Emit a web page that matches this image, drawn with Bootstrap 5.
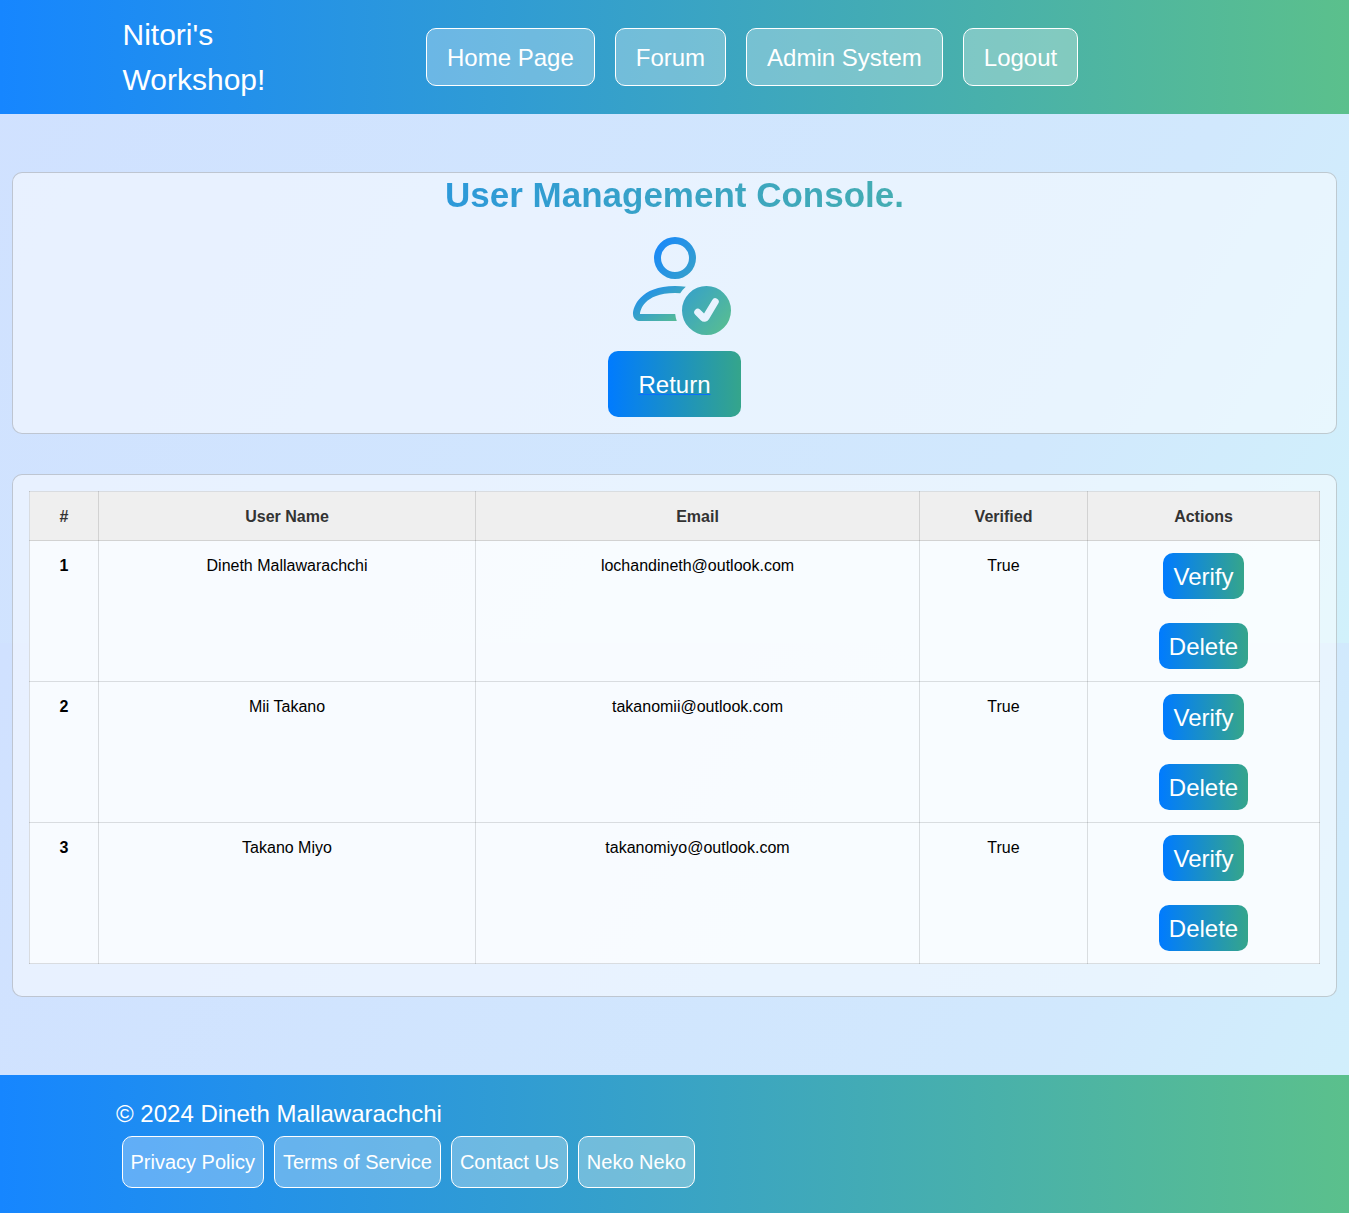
<!DOCTYPE html>
<html lang="en">
<head>
<meta charset="utf-8">
<meta name="viewport" content="width=device-width, initial-scale=1">
<title>User Management Console</title>
<link href="https://cdn.jsdelivr.net/npm/bootstrap@5.3.0/dist/css/bootstrap.min.css" rel="stylesheet">
<style>
body{font-family:"Liberation Sans",Arial,sans-serif;font-size:24px;color:#fff;background:linear-gradient(120deg,#d0e1ff,#d1e8fd 75%,#d1f1fb) 0 0/100% 643px}
.brand-bar{background:linear-gradient(90deg,#1686ff,#5bc08c)}
.site-head{height:114px}
.site-foot{height:138px;margin-top:78px;padding:21px 116px 0}
.copyright{line-height:36px}
.wordmark{width:180px;margin-left:122.5px;font-size:30px;line-height:45px}
.head-links{margin-left:123.5px;gap:20px}
.glass{border:1px solid #fff;border-radius:10px;background:rgba(255,255,255,.3);color:#fff;text-decoration:none}
.head-links .glass{padding:11px 20px 9px;line-height:36px}
.foot-links{gap:10px;margin-top:4px;padding-left:6px}
.foot-links .glass{font-size:20px;line-height:30px;padding:10px 8.5px 10px 7.5px}
.panel{background:rgba(255,255,255,.5);border:1px solid rgba(0,0,0,.18);border-radius:10px;margin:0 12px}
.panel-top{margin-top:58px;height:262px}
.panel-users{margin-top:40px;height:523px;padding:16px}
.console-title{font-size:35px;font-weight:700;line-height:43px;margin:0;color:transparent;background:linear-gradient(90deg,#1686ff,#5bc08c);background-clip:text;-webkit-background-clip:text}
.user-icon{width:112px;height:112px;margin-top:7px}
.act{display:inline-block;border:0;border-radius:10px;color:#fff;background:linear-gradient(90deg,#007bff,#35a58b);line-height:36px;padding:6px 10px 4px;text-decoration:none}
.act-return{padding:16px 30px 14px;margin-top:16px}
.act-return a{color:#fff;text-decoration:underline;text-decoration-color:#0d6efd;text-decoration-thickness:1px}
.users{table-layout:fixed;width:1291px;border-collapse:collapse;font-size:16px;line-height:24px;text-align:center;color:#000;background:rgba(255,255,255,.7)}
.users th,.users td{border:1px solid rgba(0,0,0,.12);padding:13px 12px 11px;vertical-align:top}
.users td.act-cell{padding:12px}
.users thead th{background:#efefef;color:#333}
.users .act{font-size:24px}
.acts{gap:24px}
</style>
</head>
<body>
<header class="site-head brand-bar d-flex align-items-center">
<div class="wordmark">Nitori's Workshop!</div>
<nav class="head-links d-flex">
<a class="glass" href="#">Home Page</a><a class="glass" href="#">Forum</a><a class="glass" href="#">Admin System</a><a class="glass" href="#">Logout</a>
</nav>
</header>
<main>
<section class="panel panel-top d-flex flex-column align-items-center">
<h1 class="console-title align-self-stretch text-center">User Management Console.</h1>
<svg class="user-icon" viewBox="0 0 16 16">
<defs><linearGradient id="g1" x1="0" y1="0" x2="1" y2="1"><stop stop-color="#1686ff"/><stop offset="1" stop-color="#5bc08c"/></linearGradient></defs>
<g fill="url(#g1)"><path d="M12.5 16a3.500 3.500 0 1 0 0-7 3.500 3.500 0 0 0 0 7m1.679-4.493-1.335 2.226a.75.75 0 0 1-1.174.144l-.774-.773a.5.5 0 0 1 .708-.708l.547.548 1.170-1.951a.5.5 0 1 1 .858.514M11 5a3 3 0 1 1-6 0 3 3 0 0 1 6 0M8 7a2 2 0 1 0 0-4 2 2 0 0 0 0 4"/><path d="M8.256 14a4.500 4.500 0 0 1-.229-1.004H3c.001-.246.154-.986.832-1.664C4.484 10.680 5.711 10 8 10q.390 0 .740.025c.226-.341.496-.650.804-.918Q8.844 9.002 8 9c-5 0-6 3-6 4s1 1 1 1z"/></g>
</svg>
<div class="act act-return"><a href="#">Return</a></div>
</section>
<section class="panel panel-users">
<table class="users">
<colgroup><col style="width:69px"><col style="width:377px"><col style="width:444px"><col style="width:168px"><col style="width:232px"></colgroup>
<thead><tr><th>#</th><th>User Name</th><th>Email</th><th>Verified</th><th>Actions</th></tr></thead>
<tbody>
<tr><th>1</th><td>Dineth Mallawarachchi</td><td>lochandineth@outlook.com</td><td>True</td><td class="act-cell"><div class="acts d-flex flex-column align-items-center"><button class="act">Verify</button><button class="act">Delete</button></div></td></tr>
<tr><th>2</th><td>Mii Takano</td><td>takanomii@outlook.com</td><td>True</td><td class="act-cell"><div class="acts d-flex flex-column align-items-center"><button class="act">Verify</button><button class="act">Delete</button></div></td></tr>
<tr><th>3</th><td>Takano Miyo</td><td>takanomiyo@outlook.com</td><td>True</td><td class="act-cell"><div class="acts d-flex flex-column align-items-center"><button class="act">Verify</button><button class="act">Delete</button></div></td></tr>
</tbody>
</table>
</section>
</main>
<footer class="site-foot brand-bar">
<div class="copyright">© 2024 Dineth Mallawarachchi</div>
<nav class="foot-links d-flex">
<a class="glass" href="#">Privacy Policy</a><a class="glass" href="#">Terms of Service</a><a class="glass" href="#">Contact Us</a><a class="glass" href="#">Neko Neko</a>
</nav>
</footer>
<script src="https://cdn.jsdelivr.net/npm/bootstrap@5.3.0/dist/js/bootstrap.bundle.min.js"></script>
</body>
</html>
